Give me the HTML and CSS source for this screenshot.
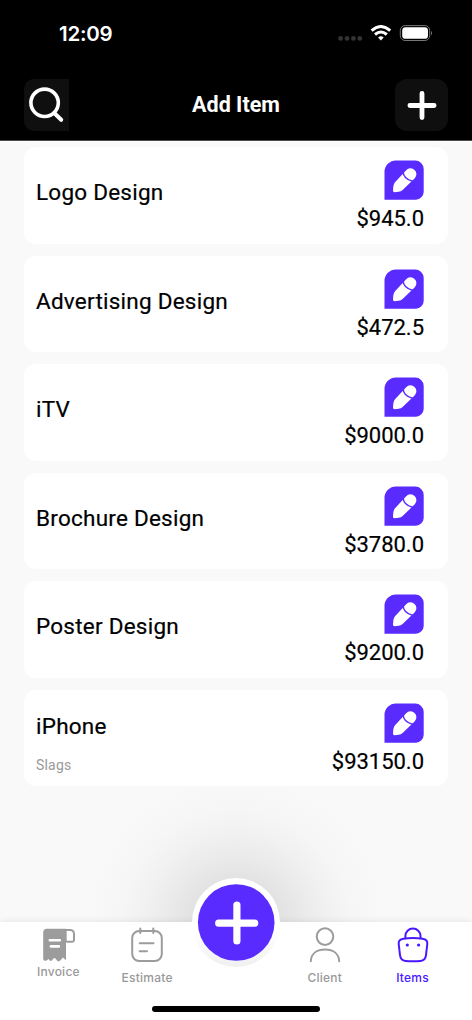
FILE: index.html
```html
<!DOCTYPE html>
<html lang="en">
<head>
<meta charset="utf-8">
<title>Add Item</title>
<link rel="stylesheet" href="styles.css">
</head>
<body>
<svg class="defs" width="0" height="0">
  <symbol id="pencil" viewBox="0 0 40 40">
    <path d="M.5 12A11.5 11.5 0 0 1 12 .5H31A8.5 8.5 0 0 1 39.7 9V32A8 8 0 0 1 32 39.7H.5Z" fill="#5a2bff"/>
    <path d="M11 22.2L22.2 10.2A5.9 5.9 0 0 1 30.8 18.3L18.6 30Q17 31.6 14.6 31.8L10.6 32.2Q8.9 32.2 9 30.5L9.3 26.6Q9.5 24 11 22.2Z" fill="#fff"/>
    <path d="M19 11.5Q19.6 19.2 28.6 21.2" fill="none" stroke="#5a2bff" stroke-width="1.5"/>
  </symbol>
</svg>
<div class="screen">
  <header class="header">
    <div class="status">
      <span class="time">12:09</span>
      <svg class="signals" width="96" height="20" viewBox="0 0 96 20">
        <g fill="#333"><circle cx="3.6" cy="13.4" r="2.4"/><circle cx="10" cy="13.4" r="2.4"/><circle cx="16.4" cy="13.4" r="2.4"/><circle cx="22.8" cy="13.4" r="2.4"/></g>
        <g fill="none" stroke="#fff" stroke-width="3">
          <path d="M34.6 5.7Q43.9-2.6 53.2 5.7"/>
          <path d="M38 9.5Q43.9 4.4 49.8 9.5"/>
        </g>
        <path d="M41.1 12.4Q43.9 10.2 46.7 12.4L43.9 15.6Z" fill="#fff"/>
        <rect x="63.3" y=".6" width="29.4" height="14.9" rx="4.8" fill="none" stroke="#777"/>
        <rect x="65.2" y="2.3" width="25.8" height="11.5" rx="3.4" fill="#fff"/>
        <path d="M94 5.8Q96 8.2 94 10.4Z" fill="#777"/>
      </svg>
    </div>
    <div class="titlebar">
      <div class="search"><svg width="45" height="52" viewBox="0 0 45 52" fill="none" stroke="#fff"><circle cx="20.6" cy="23.8" r="13.7" stroke-width="3.6"/><path d="M30.2 34L37.2 40.8" stroke-width="4" stroke-linecap="round"/></svg></div>
      <h1 class="title">Add Item</h1>
      <div class="add"><svg width="53" height="52" viewBox="0 0 53 52" fill="none" stroke="#fff" stroke-width="4.8" stroke-linecap="round"><path d="M27 14.4V38.6M14.9 26.5H39.1"/></svg></div>
    </div>
  </header>
  <main class="list">
    <article class="card"><div class="info"><h2 class="name">Logo Design</h2></div><div class="side"><svg class="edit"><use href="#pencil"/></svg><span class="price">$945.0</span></div></article>
    <article class="card"><div class="info"><h2 class="name">Advertising Design</h2></div><div class="side"><svg class="edit"><use href="#pencil"/></svg><span class="price">$472.5</span></div></article>
    <article class="card"><div class="info"><h2 class="name">iTV</h2></div><div class="side"><svg class="edit"><use href="#pencil"/></svg><span class="price">$9000.0</span></div></article>
    <article class="card"><div class="info"><h2 class="name">Brochure Design</h2></div><div class="side"><svg class="edit"><use href="#pencil"/></svg><span class="price">$3780.0</span></div></article>
    <article class="card"><div class="info"><h2 class="name">Poster Design</h2></div><div class="side"><svg class="edit"><use href="#pencil"/></svg><span class="price">$9200.0</span></div></article>
    <article class="card"><div class="info noted"><h2 class="name">iPhone</h2><p class="note">Slags</p></div><div class="side"><svg class="edit"><use href="#pencil"/></svg><span class="price">$93150.0</span></div></article>
  </main>
  <nav class="tabs">
    <a class="tab invoice">
      <svg width="34" height="34" viewBox="0 0 34 34">
        <path d="M6 .8H25V32.2L22 29.6L19 32.8Q17.5 34 16 32.4L14.5 30.6Q13.5 29.4 12.5 30.6L11 32.2Q9.8 33.6 8.6 32.2L7.6 31L5.6 32.5Q2.2 33.6 2.2 31V5Q2.2 .8 6 .8Z" fill="#9c9c9c"/>
        <path d="M24.7 2H29.5Q33 2.2 33 6V12Q32.8 13.8 31 13.8H25.8Q24.7 13.8 24.7 12.5Z" fill="#fff" stroke="#9c9c9c" stroke-width="2"/>
        <path d="M8.8 12.2H18.8M9.9 18.4H17.8" stroke="#fff" stroke-width="2.6" stroke-linecap="round"/>
      </svg>
      <span>Invoice</span>
    </a>
    <a class="tab">
      <svg width="34" height="36" viewBox="0 0 34 36" fill="none" stroke="#9c9c9c" stroke-width="2" stroke-linecap="round">
        <rect x="2.2" y="4" width="29.6" height="30" rx="7"/>
        <path d="M10.3 1.5V6M23.3 1.5V6M9.7 16.2H23.5M9.7 24.3H17"/>
      </svg>
      <span>Estimate</span>
    </a>
    <span class="gap"></span>
    <a class="tab">
      <svg width="34" height="36" viewBox="0 0 34 36" fill="none" stroke="#9c9c9c" stroke-width="2" stroke-linecap="round">
        <circle cx="17" cy="9.6" r="8.3"/><path d="M2.8 34.3C3.1 26.5 9 22.5 17 22.5S30.9 26.5 31.2 34.3"/>
      </svg>
      <span>Client</span>
    </a>
    <a class="tab active">
      <svg width="34" height="36" viewBox="0 0 34 36" fill="none" stroke="#4a18ff" stroke-width="2">
        <path d="M9.4 11.7V9C9.4 4.8 12.7 1.5 16.9 1.5S24.5 4.8 24.5 9V11.7"/>
        <path d="M7.5 11.7Q17 10.5 26.5 11.7Q31.8 12.4 31.3 17L30 28.2Q29.4 33.5 24.5 34Q17 34.6 9.5 34Q4.6 33.5 4 28.2L2.7 17Q2.2 12.4 7.5 11.7Z"/>
        <circle cx="11.3" cy="18" r="1.6" fill="#4a18ff" stroke="none"/><circle cx="22.6" cy="18" r="1.6" fill="#4a18ff" stroke="none"/>
      </svg>
      <span>Items</span>
    </a>
    <div class="fab"><svg width="78" height="78" viewBox="0 0 78 78"><circle cx="39.2" cy="38.5" r="38.3" fill="#5a2bff"/><path d="M39.9 21V57M21.7 39.2H57.7" stroke="#fff" stroke-width="7.2" stroke-linecap="round"/></svg></div>
    <div class="home"></div>
  </nav>
</div>
</body>
</html>
```
FILE: styles.css
```css
* { box-sizing: border-box; }
body { margin: 0; background: #f9f9f9; font-family: Roboto, "Liberation Sans", sans-serif; }
.defs { display: block; position: absolute; }
.screen { width: 472px; height: 1020px; display: flex; flex-direction: column; overflow: hidden; background: radial-gradient(circle at 236px 925px, #dedede 0, #e2e2e2 45px, #eaeaea 68px, #f1f1f1 92px, #f6f6f6 115px, #f9f9f9 152px); }
.header { flex: none; height: 141px; background: #000; color: #fff; border-bottom: 1px solid #4a474a; }
.status { height: 79px; padding: 25px 39px 0 59px; display: flex; justify-content: space-between; }
.time { font: 600 20.5px/18px Inter, sans-serif; letter-spacing: -.25px; }
.titlebar { display: flex; justify-content: space-between; align-items: center; height: 52px; padding: 0 24px; }
.search { width: 45px; height: 52px; border-radius: 10px 0 0 10px; background: #0f0f0f; }
.add { width: 53px; height: 52px; border-radius: 12px; background: #0f0f0f; }
.search svg, .add svg { display: block; }
.title { margin: 0 0 0 8px; font-size: 21.5px; line-height: 26px; font-weight: 700; }
.list { flex: 1; padding: 6.2px 24px 0; display: flex; flex-direction: column; gap: 12px; background: linear-gradient(#fff, #fff) 0 0 / 100% 1px no-repeat; }
.card { height: 96.5px; flex: none; background: #fff; border-radius: 12px; padding: 13px 24px 0 12px; display: flex; justify-content: space-between; }
.info { padding-top: 18px; }
.info.noted { padding-top: 9.4px; }
.name { margin: 0; font-size: 22.5px; line-height: 28px; font-weight: 400; color: #000; letter-spacing: .24px; -webkit-text-stroke: .2px #000; }
.note { margin: 16px 0 0; font-size: 14px; line-height: 18px; color: #999; letter-spacing: .2px; }
.side { display: flex; flex-direction: column; align-items: flex-end; }
.edit { width: 40px; height: 40px; display: block; }
.price { margin-top: 6px; font-size: 22px; line-height: 26px; letter-spacing: -.02px; color: #000; -webkit-text-stroke: .2px #000; }
.tabs { flex: none; position: relative; height: 98px; padding: 5px 14px 0; background: #fff; box-shadow: 0 -1px 6px rgba(0,0,0,.08); display: grid; grid-template-columns: repeat(5, 88.8px); }
.tab { display: flex; flex-direction: column; align-items: center; font: 500 12px/16px Inter, sans-serif; letter-spacing: .25px; color: #999; }
.tab svg { display: block; margin-bottom: 7px; }
.tab.invoice svg { margin-bottom: 2px; margin-top: 1px; }
.tab.active { color: #4a18ff; }
.tab.active span { position: relative; left: -1px; }
.tab.active svg { position: relative; left: -1px; }
.fab { position: absolute; left: 192px; top: -44px; width: 88px; height: 89px; padding: 6px 5px; border-radius: 50%; background: linear-gradient(#fff 60%, #f0f0f0); }
.fab svg { display: block; }
.home { position: absolute; left: 152px; top: 84px; width: 168px; height: 6px; border-radius: 3px; background: #000; }
```
